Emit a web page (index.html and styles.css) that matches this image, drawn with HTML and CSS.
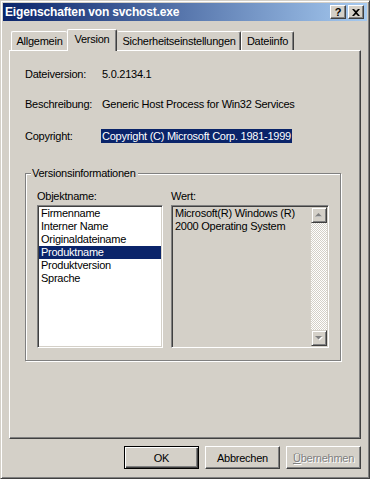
FILE: index.html
```html
<!DOCTYPE html>
<html>
<head>
    <title>Eigenschaften von svchost.exe</title>
    <link rel="stylesheet" href="styles.css">
</head>
<body>
    <div class="window">
        <div class="titlebar">
            <span class="title">Eigenschaften von svchost.exe</span>
            <div class="caption">
                <div class="cap cap-help">?</div>
                <div class="cap">
                    <svg width="8" height="7" viewBox="0 0 8 7"><path d="M0 0h2l2 2 2-2h2L5 3.5 8 7H6L4 5 2 7H0l3-3.5z" fill="#000"/></svg>
                </div>
            </div>
        </div>

        <div class="content">
            <div class="tabs">
                <div class="tab tab-a">Allgemein</div>
                <div class="tab active">Version</div>
                <div class="tab tab-s">Sicherheitseinstellungen</div>
                <div class="tab tab-d">Dateiinfo</div>
            </div>

            <div class="panel">
                <div class="field"><span class="label">Dateiversion:</span><span class="value">5.0.2134.1</span></div>
                <div class="field"><span class="label">Beschreibung:</span><span class="value">Generic Host Process for Win32 Services</span></div>
                <div class="field copyright"><span class="label">Copyright:</span><span class="value selected">Copyright (C) Microsoft Corp. 1981-1999</span></div>

                <fieldset class="group">
                    <legend>Versionsinformationen</legend>
                    <div class="cols">
                        <div class="col">
                            <div class="col-label">Objektname:</div>
                            <ul class="list">
                                <li>Firmenname</li>
                                <li>Interner Name</li>
                                <li>Originaldateiname</li>
                                <li class="current">Produktname</li>
                                <li>Produktversion</li>
                                <li>Sprache</li>
                            </ul>
                        </div>
                        <div class="col">
                            <div class="col-label">Wert:</div>
                            <div class="valuebox">
                                <div class="valuetext">Microsoft(R) Windows (R)<br>2000 Operating System</div>
                                <div class="scrollbar">
                                    <div class="sbtn">
                                        <svg width="8" height="5" viewBox="0 0 8 5"><path d="M4 1 7 4H1z" fill="#fff"/><path d="M3.5 0 7 3.5H0z" fill="#808080"/></svg>
                                    </div>
                                    <div class="track"></div>
                                    <div class="sbtn">
                                        <svg width="8" height="5" viewBox="0 0 8 5"><path d="M1 1h7L4.5 4.5z" fill="#fff"/><path d="M0 0h7L3.5 3.5z" fill="#808080"/></svg>
                                    </div>
                                </div>
                            </div>
                        </div>
                    </div>
                </fieldset>
            </div>

            <div class="buttons">
                <button class="btn default">OK</button>
                <button class="btn">Abbrechen</button>
                <button class="btn disabled"><u>Ü</u>bernehmen</button>
            </div>
        </div>
    </div>
</body>
</html>
```

FILE: styles.css
```css
* {
    margin: 0;
    padding: 0;
    box-sizing: border-box
}

body {
    background-color: #d4d0c8;
    font: 11px "Liberation Sans", Arial, sans-serif;
    letter-spacing: -0.25px;
    color: #000
}

.window {
    width: 370px;
    height: 479px;
    display: flex;
    flex-direction: column;
    padding: 2px;
    border: 1px solid;
    border-color: #d4d0c8 #404040 #404040 #d4d0c8;
    box-shadow: inset 1px 1px #fff, inset -1px -1px #808080;
    background-color: #d4d0c8
}

.titlebar {
    height: 18px;
    display: flex;
    align-items: center;
    justify-content: space-between;
    padding: 0 3px 0 2px;
    background: linear-gradient(to right, #0a246a, #a6caf0)
}

.title {
    color: #fff;
    font-weight: bold;
    font-size: 12px;
    letter-spacing: -0.15px
}

.caption {
    display: flex;
    gap: 2px
}

.cap {
    width: 16px;
    height: 14px;
    display: flex;
    justify-content: center;
    align-items: center;
    background-color: #d4d0c8;
    border: 1px solid;
    border-color: #fff #404040 #404040 #fff;
    box-shadow: inset -1px -1px #808080
}

.cap-help {
    font-weight: bold;
    font-size: 11px;
    line-height: 12px
}

.content {
    flex: 1;
    display: flex;
    flex-direction: column;
    padding: 8px 6px 7px 6px
}

.tabs {
    display: flex;
    align-items: flex-end;
    height: 21px;
    padding-left: 2px;
    position: relative;
    z-index: 1
}

.tab {
    height: 19px;
    padding: 3px 0 0;
    line-height: 13px;
    text-align: center;
    white-space: nowrap;
    background-color: #d4d0c8;
    border: 1px solid;
    border-bottom: none;
    border-color: #fff #404040 #404040 #fff;
    box-shadow: inset -1px 0 #808080;
    border-radius: 2px 2px 0 0
}

.tab-a {
    width: 56px;
    border-right: none;
    box-shadow: none
}

.tab-s {
    width: 124px;
    border-left-color: #d4d0c8
}

.tab-d {
    width: 53px
}

.tab.active {
    width: 50px;
    height: 22px;
    margin-bottom: -1px
}

.panel {
    flex: 1;
    display: flex;
    flex-direction: column;
    padding: 16px 19px 0 15px;
    border: 1px solid;
    border-color: #fff #404040 #404040 #fff;
    box-shadow: inset -1px -1px #808080
}

.field {
    display: flex;
    line-height: 14px;
    margin-bottom: 16px
}

.field.copyright {
    margin-top: 2px;
    margin-bottom: 0
}

.label {
    width: 77px
}

.selected {
    background-color: #0a246a;
    color: #fff;
    margin-left: -1px;
    padding: 0 1px
}

.group {
    height: 194px;
    margin-top: 24px;
    padding: 10px 10px 12px 11px;
    border: 1px solid #808080;
    box-shadow: 1px 1px #fff, inset 1px 1px #fff
}

.group legend {
    margin-left: -6px;
    padding: 0 2px 0 1px;
    line-height: 13px;
    background-color: #d4d0c8;
    position: relative
}

.cols {
    display: flex;
    gap: 8px
}

.col-label {
    line-height: 13px;
    margin-bottom: 2px
}

.list,
.valuebox {
    height: 143px;
    padding: 1px;
    border: 1px solid;
    border-color: #808080 #fff #fff #808080;
    box-shadow: inset 1px 1px #404040, inset -1px -1px #d4d0c8
}

.list {
    width: 126px;
    list-style: none;
    background-color: #fff
}

.list li {
    line-height: 13px;
    padding-left: 2px
}

.list li.current {
    background-color: #0a246a;
    color: #fff
}

.valuebox {
    width: 158px;
    display: flex;
    background-color: #d4d0c8
}

.valuetext {
    flex: 1;
    padding-left: 2px;
    line-height: 13px
}

.scrollbar {
    width: 16px;
    display: flex;
    flex-direction: column
}

.sbtn {
    height: 16px;
    display: flex;
    justify-content: center;
    align-items: center;
    background-color: #d4d0c8;
    border: 1px solid;
    border-color: #d4d0c8 #404040 #404040 #d4d0c8;
    box-shadow: inset 1px 1px #fff, inset -1px -1px #808080
}

.track {
    flex: 1;
    background: repeating-conic-gradient(#fff 0 25%, #d4d0c8 0 50%) 0 0 / 2px 2px
}

.buttons {
    display: flex;
    justify-content: flex-end;
    gap: 6px;
    margin-top: 7px
}

.btn {
    width: 75px;
    height: 23px;
    font: inherit;
    letter-spacing: inherit;
    color: #000;
    background-color: #d4d0c8;
    border: 1px solid;
    border-color: #fff #404040 #404040 #fff;
    box-shadow: inset -1px -1px #808080
}

.btn.default {
    border-color: #000;
    box-shadow: inset 1px 1px #fff, inset -1px -1px #404040, inset -2px -2px #808080
}

.btn.disabled {
    color: #808080;
    text-shadow: 1px 1px #fff
}
```
